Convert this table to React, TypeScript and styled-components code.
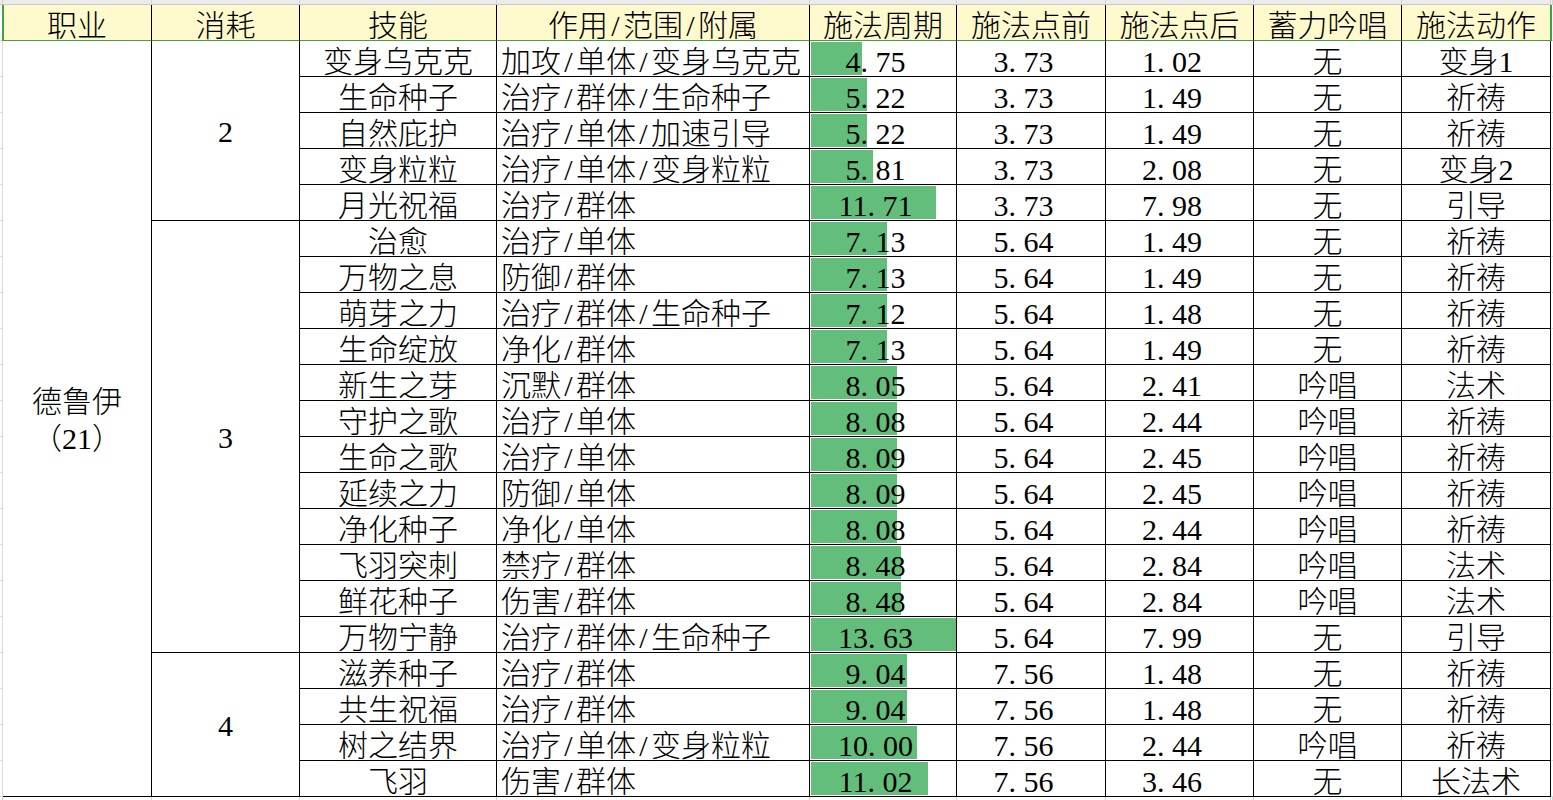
import React from 'react';
import styled, { createGlobalStyle } from 'styled-components';

const GlobalStyle = createGlobalStyle`
  html, body { margin: 0; padding: 0; background: #ffffff; }
  body { font-family: "Liberation Serif", "Noto Sans CJK SC", serif; }
`;

const COLS = [3, 149, 148, 197, 313, 147, 149, 148, 148, 149, 2];

const Sheet = styled.div`
  display: grid;
  grid-template-columns: ${COLS.map((c) => `${c}px`).join(' ')};
  grid-template-rows: 5px repeat(22, 36px) 4px;
  width: 1553px;
  height: 800px;
  overflow: hidden;
  position: relative;
  background: #ffffff;
  font-family: "Liberation Serif", "Noto Sans CJK SC", serif;
  font-size: 30px;
  color: #000000;
`;

type Place = { $c: number; $r: number; $span?: number };

const StripCell = styled.div<Place & { $top?: boolean }>`
  grid-column: ${(p) => p.$c};
  grid-row: ${(p) => p.$r};
  box-sizing: border-box;
  background: ${(p) => (p.$top ? '#ebebeb' : '#ffffff')};
  border-right: 1px solid #d4d4d4;
  border-bottom: ${(p) => (p.$top ? '1px solid #c8c8c8' : 'none')};
`;

const Gutter = styled.div<Place & { $left?: boolean }>`
  grid-column: ${(p) => p.$c};
  grid-row: ${(p) => p.$r};
  box-sizing: border-box;
  background: #ffffff;
  border-bottom: 1px solid #dadada;
  border-right: ${(p) => (p.$left ? '1px solid #dadada' : 'none')};
`;

const Cell = styled.div<Place & { $align?: 'left' | 'center'; $num?: boolean }>`
  grid-column: ${(p) => p.$c};
  grid-row: ${(p) => p.$r} / span ${(p) => p.$span ?? 1};
  box-sizing: border-box;
  border-right: 1px solid #000000;
  border-bottom: 1px solid #000000;
  display: flex;
  align-items: flex-end;
  justify-content: ${(p) => (p.$align === 'left' ? 'flex-start' : 'center')};
  padding-left: ${(p) => (p.$align === 'left' ? '4px' : '0')};
  padding-right: ${(p) => (p.$num ? '15px' : '0')};
  line-height: 29px;
  white-space: nowrap;
  position: relative;
  font-weight: 300;
`;

const HeadCell = styled(Cell)`
  background: #fffacd;
  border-bottom-color: #3fa33f;
`;

const MergedCell = styled(Cell)`
  flex-direction: column;
  justify-content: center;
  align-items: center;
  line-height: 37px;
  padding-top: 2px;
`;

const Bar = styled.div`
  position: absolute;
  left: 1px;
  top: 1px;
  bottom: 1px;
  background: #63be7b;
`;

const CellText = styled.span`
  position: relative;
`;

const Dot = styled.span`
  display: inline-block;
  width: 0.5em;
  text-align: left;
`;

const Slash = styled.span`
  display: inline-block;
  width: 0.5em;
  text-align: center;
`;

const SelectionFrame = styled.div`
  position: absolute;
  left: 2px;
  top: 5px;
  width: 1550px;
  height: 36px;
  box-sizing: border-box;
  border-left: 2px solid #3fa33f;
  border-right: 2px solid #3fa33f;
  pointer-events: none;
`;

const Num: React.FC<{ v: string }> = ({ v }) => {
  const [a, b] = v.split('.');
  return (
    <CellText>
      {a}
      <Dot>.</Dot>
      {b}
    </CellText>
  );
};

const Slashed: React.FC<{ text: string }> = ({ text }) => {
  const parts = text.split('/');
  return (
    <CellText>
      {parts.map((p, i) => (
        <React.Fragment key={i}>
          {i > 0 && <Slash>/</Slash>}
          {p}
        </React.Fragment>
      ))}
    </CellText>
  );
};

const HEADERS = ['职业', '消耗', '技能', '作用/范围/附属', '施法周期', '施法点前', '施法点后', '蓄力吟唱', '施法动作'];

const ROWS: string[][] = [
  ['变身乌克克', '加攻/单体/变身乌克克', '4.75', '3.73', '1.02', '无', '变身1'],
  ['生命种子', '治疗/群体/生命种子', '5.22', '3.73', '1.49', '无', '祈祷'],
  ['自然庇护', '治疗/单体/加速引导', '5.22', '3.73', '1.49', '无', '祈祷'],
  ['变身粒粒', '治疗/单体/变身粒粒', '5.81', '3.73', '2.08', '无', '变身2'],
  ['月光祝福', '治疗/群体', '11.71', '3.73', '7.98', '无', '引导'],
  ['治愈', '治疗/单体', '7.13', '5.64', '1.49', '无', '祈祷'],
  ['万物之息', '防御/群体', '7.13', '5.64', '1.49', '无', '祈祷'],
  ['萌芽之力', '治疗/群体/生命种子', '7.12', '5.64', '1.48', '无', '祈祷'],
  ['生命绽放', '净化/群体', '7.13', '5.64', '1.49', '无', '祈祷'],
  ['新生之芽', '沉默/群体', '8.05', '5.64', '2.41', '吟唱', '法术'],
  ['守护之歌', '治疗/单体', '8.08', '5.64', '2.44', '吟唱', '祈祷'],
  ['生命之歌', '治疗/单体', '8.09', '5.64', '2.45', '吟唱', '祈祷'],
  ['延续之力', '防御/单体', '8.09', '5.64', '2.45', '吟唱', '祈祷'],
  ['净化种子', '净化/单体', '8.08', '5.64', '2.44', '吟唱', '祈祷'],
  ['飞羽突刺', '禁疗/群体', '8.48', '5.64', '2.84', '吟唱', '法术'],
  ['鲜花种子', '伤害/群体', '8.48', '5.64', '2.84', '吟唱', '法术'],
  ['万物宁静', '治疗/群体/生命种子', '13.63', '5.64', '7.99', '无', '引导'],
  ['滋养种子', '治疗/群体', '9.04', '7.56', '1.48', '无', '祈祷'],
  ['共生祝福', '治疗/群体', '9.04', '7.56', '1.48', '无', '祈祷'],
  ['树之结界', '治疗/单体/变身粒粒', '10.00', '7.56', '2.44', '吟唱', '祈祷'],
  ['飞羽', '伤害/群体', '11.02', '7.56', '3.46', '无', '长法术'],
];

const COST_GROUPS = [
  { label: '2', start: 0, span: 5 },
  { label: '3', start: 5, span: 12 },
  { label: '4', start: 17, span: 4 },
];

const MAX = 13.63;
const BAR_MAX = 145;

export default function App() {
  const firstRow = 3;
  return (
    <>
      <GlobalStyle />
      <Sheet>
        {COLS.map((_, i) => (
          <StripCell key={`t${i}`} $c={i + 1} $r={1} $top />
        ))}

        <Gutter $c={1} $r={2} $left />
        {HEADERS.map((h, i) => (
          <HeadCell key={h} $c={i + 2} $r={2}>
            <Slashed text={h} />
          </HeadCell>
        ))}
        <Gutter $c={11} $r={2} />

        <MergedCell $c={2} $r={firstRow} $span={ROWS.length}>
          <CellText>德鲁伊</CellText>
          <CellText>（21）</CellText>
        </MergedCell>

        {COST_GROUPS.map((g) => (
          <MergedCell key={g.label} $c={3} $r={firstRow + g.start} $span={g.span}>
            <CellText>{g.label}</CellText>
          </MergedCell>
        ))}

        {ROWS.map((row, i) => {
          const r = firstRow + i;
          const [skill, effect, cycle, pre, post, charge, action] = row;
          return (
            <React.Fragment key={skill + i}>
              <Gutter $c={1} $r={r} $left />
              <Cell $c={4} $r={r}>
                <CellText>{skill}</CellText>
              </Cell>
              <Cell $c={5} $r={r} $align="left">
                <Slashed text={effect} />
              </Cell>
              <Cell $c={6} $r={r} $num>
                <Bar style={{ width: `${(parseFloat(cycle) / MAX) * BAR_MAX}px` }} />
                <Num v={cycle} />
              </Cell>
              <Cell $c={7} $r={r} $num>
                <Num v={pre} />
              </Cell>
              <Cell $c={8} $r={r} $num>
                <Num v={post} />
              </Cell>
              <Cell $c={9} $r={r}>
                <CellText>{charge}</CellText>
              </Cell>
              <Cell $c={10} $r={r}>
                <CellText>{action}</CellText>
              </Cell>
              <Gutter $c={11} $r={r} />
            </React.Fragment>
          );
        })}

        {COLS.map((_, i) => (
          <StripCell key={`b${i}`} $c={i + 1} $r={firstRow + ROWS.length} />
        ))}

        <SelectionFrame />
      </Sheet>
    </>
  );
}
